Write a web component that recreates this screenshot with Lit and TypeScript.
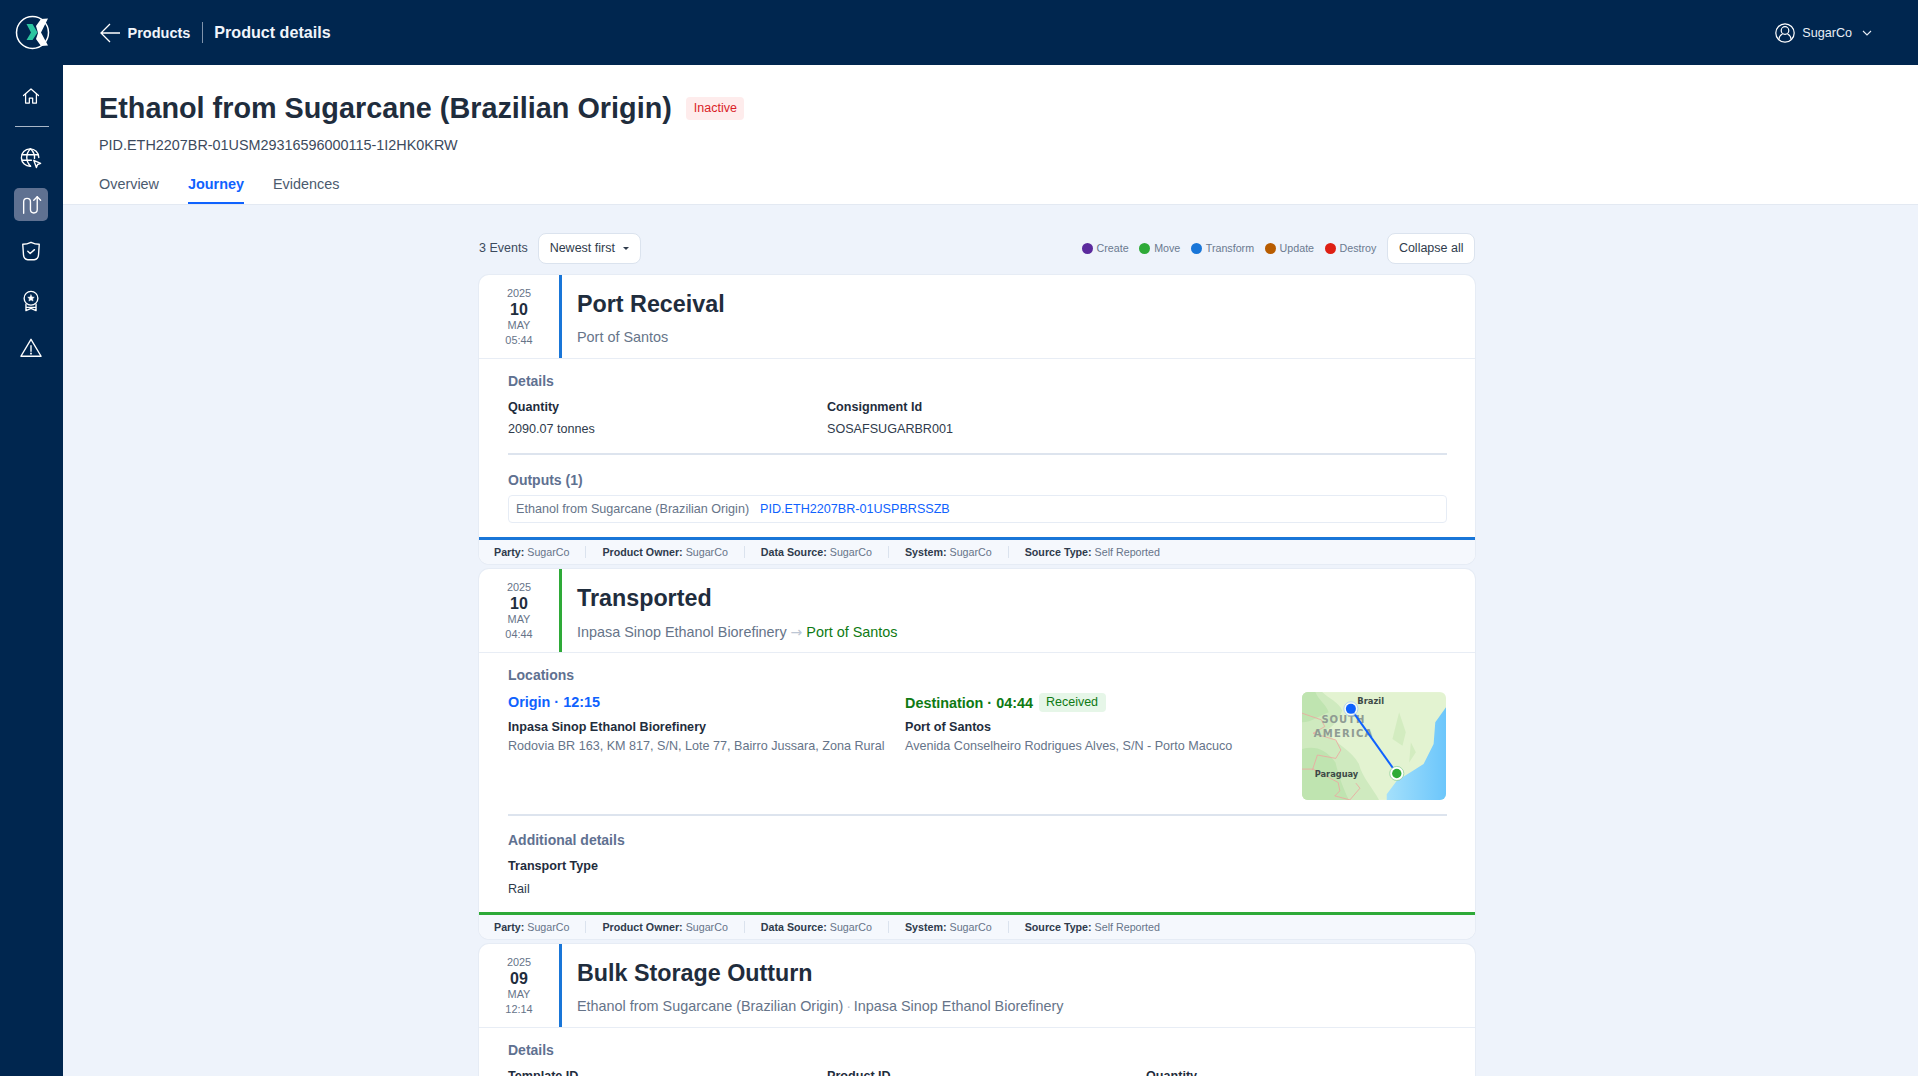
import { LitElement, html, css, svg } from 'lit';
import { customElement } from 'lit/decorators.js';

const BLUE = '#1976d8';
const GREEN = '#2eaa38';

const icon = (body: unknown, size = 22) => html`
  <svg width=${size} height=${size} viewBox="0 0 24 24" fill="none" stroke="#fff"
    stroke-width="1.5" stroke-linecap="round" stroke-linejoin="round">${body}</svg>
`;

const icons = {
  home: svg`<path d="M3 11.5 12 3.500l9 8"/><path d="M5.500 9.500V20.500h4.500v-6h4v6h4.500V9.500"/>`,
  globe: svg`<path d="M20.500 11.500A9.500 9.500 0 1 0 11.500 21"/><path d="M2.500 8.500h17.500M2.500 14.500h10"/><path d="M11.500 2c-5.500 5.500-5.500 13.500 0 19M11.500 2c3.500 3.500 4.700 7.500 4.300 10.500"/><path d="M15 14.500l7.500 3.300-3.300 1.300-1.300 3.300z"/>`,
  route: svg`<path d="M4 21V8.500a3.700 3.700 0 0 1 7.400 0v8.500a3.700 3.700 0 0 0 7.400 0V3"/><path d="M15 6.800 18.800 3l3.700 3.800"/>`,
  shield: svg`<path d="M12 2.500c3 1.500 6 2.200 9 2.200l-.8 11.500c-.2 2.700-2 5-4.700 5.300H8.500c-2.700-.3-4.500-2.600-4.700-5.300L3 4.700c3 0 6-.7 9-2.200z"/><path d="M8.500 12.300l2.600 2.500 4.700-4.300"/>`,
  badge: svg`<circle cx="12" cy="9" r="7.500"/><path d="M12 5.200l1.100 2.400 2.500.3-1.800 1.700.5 2.500-2.300-1.300-2.300 1.300.5-2.500-1.800-1.700 2.500-.3z" fill="#fff" stroke-width=".5"/><path d="M6.500 15.500V22.500l5.500-2.500 5.500 2.500v-7M6.500 19h11"/>`,
  alert: svg`<path d="M12 2.500 23 21H1z"/><path d="M12 9.500v6"/><path d="M12 18v.2" stroke-width="2"/>`,
};

type Field = { label: string; value: string };

const footer: Field[] = [
  { label: 'Party', value: 'SugarCo' },
  { label: 'Product Owner', value: 'SugarCo' },
  { label: 'Data Source', value: 'SugarCo' },
  { label: 'System', value: 'SugarCo' },
  { label: 'Source Type', value: 'Self Reported' },
];

const legend = [
  { label: 'Create', color: '#5b2a9d' },
  { label: 'Move', color: '#2eaa38' },
  { label: 'Transform', color: '#1976d8' },
  { label: 'Update', color: '#b85c00' },
  { label: 'Destroy', color: '#de1f13' },
];

@customElement('app-root')
export class AppRoot extends LitElement {
  static styles = css`
    :host {
      display: block;
      height: 1076px;
      overflow: hidden;
      font-family: 'Liberation Sans', Arial, sans-serif;
      color: #1f2d3d;
      background: #eef3fb;
    }
    * { box-sizing: border-box; }
    .topbar {
      display: flex;
      align-items: center;
      height: 65px;
      padding-left: 12px;
      padding-right: 46px;
      background: #00264f;
      color: #fff;
    }
    .topbar svg { display: block; }
    .logo { margin-right: 45px; }
    .crumb { font-size: 14.500px; font-weight: 700; margin-left: 6.500px; color: #f1f5fb; }
    .crumb-sep { width: 1px; height: 21px; margin: 0 11px 0 12px; background: #8093ab; }
    .crumb-now { font-size: 16.100px; font-weight: 700; color: #f1f5fb; }
    .user { display: flex; align-items: center; margin-left: auto; font-size: 12.600px; color: #e8eef6; }
    .user span { margin: 0 10px 0 7px; }
    .layout { display: flex; height: 1011px; }
    .sidebar {
      flex: 0 0 63px;
      display: flex;
      flex-direction: column;
      align-items: center;
      background: #00264f;
      padding-top: 14px;
    }
    .nav {
      display: flex;
      align-items: center;
      justify-content: center;
      flex: 0 0 33px;
      width: 34px;
      margin-top: 14px;
      margin-left: -1px;
      border-radius: 5px;
    }
    .nav:first-child { margin-top: 0; }
    .nav.active { background: #5f7191; }
    .nav.shield { margin-top: 13px; }
    .nav.badge { margin-top: 17px; }
    .rule { flex: 0 0 1px; width: 34px; margin-top: 14px; background: #a9b7c8; }
    .main { flex: 1; min-width: 0; }
    .head {
      height: 140px;
      padding: 25px 36px 0;
      background: #fff;
      border-bottom: 1px solid #e3e9f2;
    }
    .title-row { display: flex; align-items: center; gap: 14px; height: 36px; }
    h1 { margin: 0; font-size: 28.800px; line-height: 36px; font-weight: 700; color: #1f2d3d; }
    .pill {
      margin-top: 1px;
      padding: 0 7px 0 8px;
      height: 23px;
      line-height: 23px;
      border-radius: 4px;
      background: #feecec;
      color: #da1e28;
      font-size: 12.500px;
    }
    .pid { margin-top: 10px; font-size: 14.400px; line-height: 18px; color: #3c4a5d; }
    .tabs { display: flex; gap: 29px; margin-top: 20px; font-size: 14.400px; color: #4b5a6e; }
    .tab { height: 30px; line-height: 20px; }
    .tab.on { color: #0f62fe; font-weight: 700; border-bottom: 2px solid #0f62fe; }
    .column { width: 996px; margin: 28px 0 0 416px; }
    .toolbar { display: flex; align-items: center; height: 30px; margin-bottom: 12px; }
    .count { font-size: 12.500px; color: #3c4a5d; margin-right: 10px; }
    .btn {
      display: flex;
      align-items: center;
      height: 31px;
      padding: 0 10.500px;
      border: 1px solid #dbe3ee;
      border-radius: 8px;
      background: #fff;
      font-size: 12.500px;
      line-height: 31px;
      color: #2f3b4c;
    }
    .sort { padding: 0 11px; }
    .caret {
      width: 0;
      height: 0;
      margin-left: 8.500px;
      border-left: 3px solid transparent;
      border-right: 3px solid transparent;
      border-top: 3px solid #2f3b4c;
    }
    .legend { display: flex; align-items: center; gap: 10.500px; margin-left: auto; margin-right: 11px; }
    .legend div { display: flex; align-items: center; gap: 4px; font-size: 10.700px; color: #6b7a90; }
    .dot { width: 11px; height: 11px; border-radius: 50%; }
    .card {
      margin-bottom: 5.500px;
      background: #fff;
      border-radius: 10px;
      overflow: hidden;
      box-shadow: 0 0 0 1px #e6ecf5;
    }
    .card-head { display: flex; height: 84px; border-bottom: 1px solid #e8edf5; }
    .date {
      flex: 0 0 80px;
      display: flex;
      flex-direction: column;
      align-items: center;
      padding-top: 11px;
      font-size: 10.900px;
      line-height: 15px;
      color: #667489;
    }
    .date b { font-size: 16px; line-height: 17px; color: #1f2d3d; }
    .date i { font-style: normal; }
    .date em { font-style: normal; }
    .band { flex: 0 0 3px; }
    .summary { padding: 15px 0 0 15px; }
    h2 { margin: 0; font-size: 23.300px; line-height: 28px; font-weight: 700; color: #1f2d3d; }
    .sub { margin-top: 10px; font-size: 14.400px; line-height: 18px; color: #667489; }
    .sub .arrow { font-family: 'DejaVu Sans', sans-serif; font-size: 14px; color: #bcc6d4; }
    .sub .dim { margin: 0 -1.200px; color: #bcc6d4; }
    .sub .to { color: #0e7a13; }
    .body { padding: 13px 28px 14px 29px; }
    .card.move .body { padding-bottom: 15px; }
    .card.move .sub { margin-top: 11px; }
    h3 { margin: 0; font-size: 14px; line-height: 18px; font-weight: 700; color: #5f7191; }
    .grid { display: grid; grid-template-columns: repeat(3, 1fr); gap: 18px; margin-top: 9px; }
    .k { font-size: 12.600px; line-height: 16px; font-weight: 700; color: #1f2d3d; }
    .k.spaced { margin-top: 9px; }
    .v { margin-top: 6px; font-size: 12.600px; line-height: 16px; color: #2f3b4c; }
    .v.spaced { margin-top: 7px; }
    .sep { height: 2px; margin: 16px 0 15.500px; background: #dde4ee; }
    .sep.tight { margin-top: 14px; }
    .output {
      display: flex;
      gap: 11px;
      align-items: center;
      height: 28px;
      margin-top: 6.500px;
      padding-left: 7px;
      border: 1px solid #e6ecf5;
      border-radius: 4px;
      font-size: 12.600px;
      color: #667489;
    }
    .output a { color: #0f62fe; }
    .places { display: flex; margin-top: 7.500px; }
    .place { flex: 0 0 397px; }
    .place-head { display: flex; align-items: center; gap: 6px; height: 20px; font-size: 14.400px; font-weight: 700; }
    .place.dest .place-head { margin-top: 1px; margin-bottom: -1px; }
    .origin { color: #0f62fe; }
    .destin { color: #0e7a13; }
    .got {
      padding: 0 8px 0 7px;
      height: 19px;
      line-height: 19px;
      border-radius: 4px;
      background: #e6f6e8;
      font-size: 12.500px;
      font-weight: 400;
    }
    .place .k { margin-top: 7px; }
    .addr { margin-top: 3px; font-size: 12.600px; line-height: 16px; color: #667489; white-space: nowrap; }
    .map { display: block; border-radius: 6px; }
    .map text { font-family: 'DejaVu Sans', sans-serif; }
    .foot {
      display: flex;
      align-items: center;
      height: 26.500px;
      padding-left: 15px;
      border-top: 3px solid;
      background: #f5f8fd;
      font-size: 10.700px;
      color: #667489;
    }
    .foot b { color: #2f3b4c; }
    .foot span + span { margin-left: 16px; padding-left: 16px; border-left: 1px solid #dbe3ee; }
  `;

  private cardHead(year: string, day: string, time: string, color: string, title: string, sub: unknown) {
    return html`
      <div class="card-head">
        <div class="date"><span>${year}</span><b>${day}</b><i>MAY</i><em>${time}</em></div>
        <div class="band" style="background:${color}"></div>
        <div class="summary"><h2>${title}</h2><div class="sub">${sub}</div></div>
      </div>
    `;
  }

  private foot(color: string) {
    return html`
      <div class="foot" style="border-top-color:${color}">
        ${footer.map((f) => html`<span><b>${f.label}:</b> ${f.value}</span>`)}
      </div>
    `;
  }

  private map() {
    // hand drawn stand-in for the map tile, in 3x crop units
    return html`
      <svg class="map" width="144" height="108" viewBox="0 0 430 322">
        <defs>
          <linearGradient id="sea" x1="0" y1="0" x2="1" y2="0">
            <stop offset="0" stop-color="#a4e0fb"/>
            <stop offset="1" stop-color="#6cc6fb"/>
          </linearGradient>
        </defs>
        <rect width="430" height="322" fill="#e3f3d1"/>
        <path d="M0 0h60c20 20 50 30 60 55 -10 30 -30 50 -50 60 30 40 80 60 100 100 10 40 40 70 60 107H0z" fill="#cfeabf"/>
        <path d="M0 0h40c10 25 30 35 40 60 -30 10 -50 30 -80 30zM0 170c40-10 70 0 100 40 10 40 20 70 40 112H0z" fill="#bfe4b0"/>
        <path d="M290 60l20 60-10 40-30-20zM325 150l15 30-20 30z" fill="#d3ecc0"/>
        <path d="M430 45 398 90 393 155 363 215 323 240 283 265 253 305 253 322H430z" fill="url(#sea)"/>
        <path d="M0 63l58 20 10 20-35 20 68 20 15 30-15 25-55-10-15 45M0 230h33l75 40 5 25-15 15 45 12 30-35-12-15" fill="none" stroke="#eda6a0" stroke-width="2.500"/>
        <text x="165" y="37" font-size="24" font-weight="700" fill="#3d4a47" textLength="80" lengthAdjust="spacingAndGlyphs">Brazil</text>
        <text x="58" y="91" font-size="30" font-weight="700" fill="#8f9b93" textLength="128">SOUTH</text>
        <text x="35" y="133" font-size="30" font-weight="700" fill="#8f9b93" textLength="175">AMERICA</text>
        <text x="38" y="253" font-size="24" font-weight="700" fill="#3d4a47" textLength="130" lengthAdjust="spacingAndGlyphs">Paraguay</text>
        <line x1="146" y1="50" x2="283" y2="243" stroke="#0f62fe" stroke-width="6"/>
        <circle cx="146" cy="50" r="21" fill="#fff" fill-opacity=".7" stroke="#9cc4f5" stroke-width="2"/>
        <circle cx="146" cy="50" r="15" fill="#0f62fe"/>
        <circle cx="283" cy="243" r="21" fill="#fff" stroke="#7cc88a" stroke-width="2"/>
        <circle cx="283" cy="243" r="14" fill="#2eaa38"/>
      </svg>
    `;
  }

  render() {
    return html`
      <div class="topbar">
        <svg class="logo" width="42" height="42" viewBox="12 12 42 42" fill="none">
          <circle cx="32.500" cy="32.500" r="16" stroke="#fff" stroke-width="1.500"/>
          <path d="M26.500 24h6l5 8.500-5 7.500h-6l4.500-7.500z" fill="#2cc5a0"/>
          <path d="M41 19l7-.5-7 14 7 13-7 .5-5-7 2-6-2-7z" fill="#fff"/>
        </svg>
        <svg width="22" height="22" viewBox="0 0 22 22" fill="none" stroke="#fff" stroke-width="1.300">
          <path d="M21 11H2M11 2l-9 9 9 9"/>
        </svg>
        <span class="crumb">Products</span>
        <span class="crumb-sep"></span>
        <span class="crumb-now">Product details</span>
        <div class="user">
          <svg width="20" height="20" viewBox="0 0 20 20" fill="none" stroke="#fff" stroke-width="1.200">
            <circle cx="10" cy="10" r="9.200"/><circle cx="10" cy="7.500" r="3.800"/>
            <path d="M4 16.500c0-3 1.500-4.500 3.500-5.500M16 16.500c0-3-1.500-4.500-3.500-5.500"/>
          </svg>
          <span>SugarCo</span>
          <svg width="10" height="6" viewBox="0 0 10 6" fill="none" stroke="#e8eef6" stroke-width="1.100"><path d="M1 1l4 4 4-4"/></svg>
        </div>
      </div>
      <div class="layout">
        <div class="sidebar">
          <div class="nav">${icon(icons.home, 20)}</div>
          <div class="rule"></div>
          <div class="nav">${icon(icons.globe)}</div>
          <div class="nav active">${icon(icons.route)}</div>
          <div class="nav shield">${icon(icons.shield)}</div>
          <div class="nav badge">${icon(icons.badge)}</div>
          <div class="nav">${icon(icons.alert)}</div>
        </div>
        <div class="main">
          <div class="head">
            <div class="title-row">
              <h1>Ethanol from Sugarcane (Brazilian Origin)</h1>
              <span class="pill">Inactive</span>
            </div>
            <div class="pid">PID.ETH2207BR-01USM29316596000115-1I2HK0KRW</div>
            <div class="tabs">
              <div class="tab">Overview</div>
              <div class="tab on">Journey</div>
              <div class="tab">Evidences</div>
            </div>
          </div>
          <div class="column">
            <div class="toolbar">
              <span class="count">3 Events</span>
              <div class="btn sort">Newest first<span class="caret"></span></div>
              <div class="legend">
                ${legend.map((l) => html`<div><span class="dot" style="background:${l.color}"></span>${l.label}</div>`)}
              </div>
              <div class="btn">Collapse all</div>
            </div>

            <div class="card">
              ${this.cardHead('2025', '10', '05:44', BLUE, 'Port Receival', 'Port of Santos')}
              <div class="body">
                <h3>Details</h3>
                <div class="grid">
                  <div><div class="k">Quantity</div><div class="v">2090.07 tonnes</div></div>
                  <div><div class="k">Consignment Id</div><div class="v">SOSAFSUGARBR001</div></div>
                </div>
                <div class="sep"></div>
                <h3>Outputs (1)</h3>
                <div class="output">
                  <span>Ethanol from Sugarcane (Brazilian Origin)</span>
                  <a>PID.ETH2207BR-01USPBRSSZB</a>
                </div>
              </div>
              ${this.foot(BLUE)}
            </div>

            <div class="card move">
              ${this.cardHead('2025', '10', '04:44', GREEN, 'Transported', html`Inpasa Sinop Ethanol Biorefinery <span class="arrow">→</span> <span class="to">Port of Santos</span>`)}
              <div class="body">
                <h3>Locations</h3>
                <div class="places">
                  <div class="place">
                    <div class="place-head origin">Origin · 12:15</div>
                    <div class="k">Inpasa Sinop Ethanol Biorefinery</div>
                    <div class="addr">Rodovia BR 163, KM 817, S/N, Lote 77, Bairro Jussara, Zona Rural</div>
                  </div>
                  <div class="place dest">
                    <div class="place-head destin">Destination · 04:44 <span class="got">Received</span></div>
                    <div class="k">Port of Santos</div>
                    <div class="addr">Avenida Conselheiro Rodrigues Alves, S/N - Porto Macuco</div>
                  </div>
                  ${this.map()}
                </div>
                <div class="sep tight"></div>
                <h3>Additional details</h3>
                <div class="k spaced">Transport Type</div>
                <div class="v spaced">Rail</div>
              </div>
              ${this.foot(GREEN)}
            </div>

            <div class="card">
              ${this.cardHead('2025', '09', '12:14', BLUE, 'Bulk Storage Outturn', html`Ethanol from Sugarcane (Brazilian Origin) <span class="dim">·</span> Inpasa Sinop Ethanol Biorefinery`)}
              <div class="body">
                <h3>Details</h3>
                <div class="grid">
                  <div class="k">Template ID</div>
                  <div class="k">Product ID</div>
                  <div class="k">Quantity</div>
                </div>
              </div>
            </div>
          </div>
        </div>
      </div>
    `;
  }
}
